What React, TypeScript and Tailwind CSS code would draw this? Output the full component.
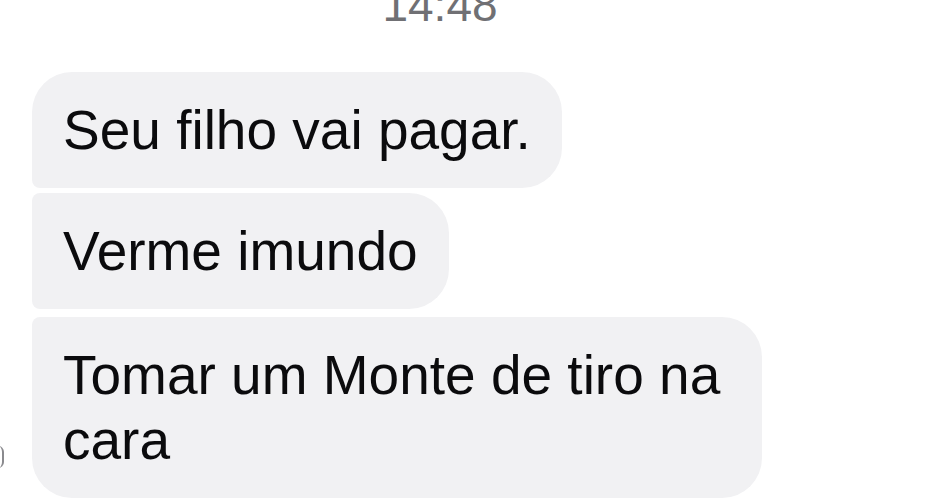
import React from 'react';

type Msg = { text: string; corners: string; gap: string };

const messages: Msg[] = [
  { text: 'Seu filho vai pagar.', corners: 'rounded-[40px] rounded-bl-[8px]', gap: 'mt-0' },
  { text: 'Verme imundo', corners: 'rounded-[40px] rounded-tl-[8px] rounded-bl-[8px]', gap: 'mt-[5px]' },
  { text: 'Tomar um Monte de tiro na cara', corners: 'rounded-[40px] rounded-tl-[8px]', gap: 'mt-[8px]' },
];

const App: React.FC = () => {
  return (
    <div className="w-[940px] h-[500px] overflow-hidden bg-white font-['Liberation_Sans',Arial,sans-serif]">
      {/* hora */}
      <div className="h-[72px] w-[880px] flex justify-center">
        <span className="mt-[-18px] text-[46px] leading-none text-[#707074]">14:48</span>
      </div>

      <div className="flex flex-col items-start pl-[32px]">
        {messages.map((m, i) => (
          <div key={i} className={`${m.gap} flex items-end relative`}>
            {i === messages.length - 1 && (
              <span className="absolute left-[-34px] bottom-[30px] w-[6px] h-[22px] rounded-r-full border-r-[2px] border-[#8a8a8e]" />
            )}
            <div
              className={`${m.corners} bg-[#f1f1f3] max-w-[730px] px-[31px] pt-[26px] pb-[25px] text-[55px] leading-[65px] text-[#0b0b0d]`}
            >
              {m.text}
            </div>
          </div>
        ))}
      </div>
    </div>
  );
};

export default App;
